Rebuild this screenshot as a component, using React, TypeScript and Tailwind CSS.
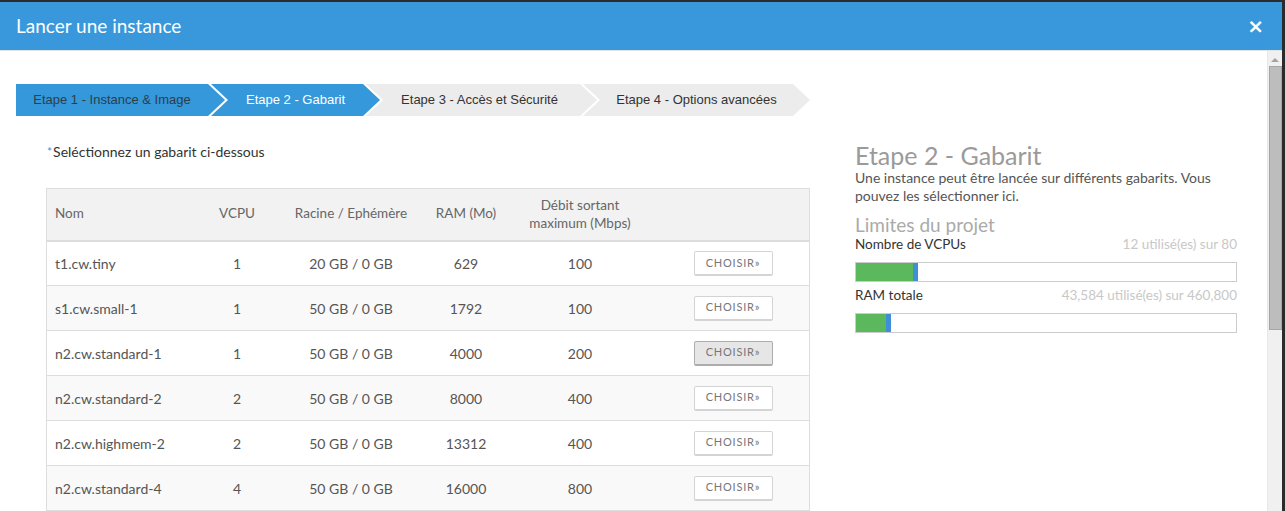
import React from 'react';

type Flavor = { name: string; vcpu: number; disk: string; ram: number; net: number; active?: boolean };

const FLAVORS: Flavor[] = [
  { name: 't1.cw.tiny', vcpu: 1, disk: '20 GB / 0 GB', ram: 629, net: 100 },
  { name: 's1.cw.small-1', vcpu: 1, disk: '50 GB / 0 GB', ram: 1792, net: 100 },
  { name: 'n2.cw.standard-1', vcpu: 1, disk: '50 GB / 0 GB', ram: 4000, net: 200, active: true },
  { name: 'n2.cw.standard-2', vcpu: 2, disk: '50 GB / 0 GB', ram: 8000, net: 400 },
  { name: 'n2.cw.highmem-2', vcpu: 2, disk: '50 GB / 0 GB', ram: 13312, net: 400 },
  { name: 'n2.cw.standard-4', vcpu: 4, disk: '50 GB / 0 GB', ram: 16000, net: 800 },
];

const FIRST = 'polygon(0 0, calc(100% - 17px) 0, 100% 50%, calc(100% - 17px) 100%, 0 100%)';
const NEXT = 'polygon(0 0, calc(100% - 17px) 0, 100% 50%, calc(100% - 17px) 100%, 0 100%, 17px 50%)';

const Steps = () => (
  <div className="flex h-[32px] font-['Liberation_Sans',Arial,sans-serif] text-[13px]">
    <div className="w-[209px] h-full bg-[#3498db] text-[#2d3e4a] flex items-center justify-center pr-[17px]" style={{ clipPath: FIRST }}>
      Etape 1 - Instance &amp; Image
    </div>
    <div className="w-[169px] -ml-[14px] h-full bg-[#3498db] text-white flex items-center justify-center pl-[17px] pr-[17px]" style={{ clipPath: NEXT }}>
      Etape 2 - Gabarit
    </div>
    <div className="w-[231px] -ml-[14px] h-full bg-[#ececec] text-[#333] flex items-center justify-center pl-[15px] pr-[19px]" style={{ clipPath: NEXT }}>
      Etape 3 - Accès et Sécurité
    </div>
    <div className="w-[227px] -ml-[14px] h-full bg-[#ececec] text-[#333] flex items-center justify-center pl-[17px] pr-[17px]" style={{ clipPath: NEXT }}>
      Etape 4 - Options avancées
    </div>
  </div>
);

const Quota = ({ label, used, green, blue }: { label: string; used: string; green: number; blue: number }) => (
  <div>
    <div className="flex justify-between text-[13.5px] leading-[18px]">
      <span className="text-[#333]">{label}</span>
      <span className="text-[#c8c8c8]">{used}</span>
    </div>
    <div className="mt-[9px] h-[20px] border border-[#ccc] flex bg-white">
      <div className="h-full bg-[#5cb85c]" style={{ width: green }} />
      <div className="h-full bg-[#3f8fd8]" style={{ width: blue }} />
    </div>
  </div>
);

const GRID = 'grid grid-cols-[154px_72px_156px_74px_154px_152px]';

export default function App() {
  return (
    <div className="w-[1285px] h-[511px] bg-[#2b2b2b] overflow-hidden pt-[2px] font-['Lato','Open_Sans',sans-serif]">
      <div className="w-[1282px] h-[509px] bg-white flex flex-col">
        <div className="h-[48px] shrink-0 bg-[#3898db] flex items-center justify-between pl-4 pr-[18px] border-b border-[#e3e3e3] box-content">
          <span className="text-white text-[19px]">Lancer une instance</span>
          <span className="text-white text-[20px] font-bold leading-none font-['DejaVu_Sans',sans-serif]">×</span>
        </div>
        <div className="flex flex-1 min-h-0">
          <div className="flex-1 pl-4 pt-[33px] overflow-hidden">
            <Steps />
            <div className="flex mt-[23px]">
              <div className="w-[794px] pl-[30px] pt-[4px]">
                <p className="text-[14px] leading-[18px] text-[#333] pl-[1px]">
                  <span className="text-[#3a8fd8] text-[12px] align-top mr-[1px]">*</span>Seléctionnez un gabarit ci-dessous
                </p>
                <div className="mt-[27px] border border-[#ddd] w-[764px] text-[14px] text-[#555]">
                  <div className={`${GRID} h-[53px] pb-[2px] bg-[#f2f2f2] border-b-2 border-[#ddd] text-[#666] text-[13.5px] items-center text-center`}>
                    <div className="text-left pl-[8px]">Nom</div>
                    <div>VCPU</div>
                    <div>Racine / Ephémère</div>
                    <div>RAM (Mo)</div>
                    <div className="leading-[18px]">Débit sortant<br />maximum (Mbps)</div>
                    <div />
                  </div>
                  {FLAVORS.map((f, i) => (
                    <div key={f.name} className={`${GRID} items-center text-center ${i > 0 ? 'h-[45px] border-t border-[#ddd]' : 'h-[43px]'} ${i % 2 === 1 ? 'bg-[#f9f9f9]' : 'bg-white'}`}>
                      <div className="text-left pl-[8px]">{f.name}</div>
                      <div>{f.vcpu}</div>
                      <div>{f.disk}</div>
                      <div>{f.ram}</div>
                      <div>{f.net}</div>
                      <div className="flex justify-center">
                        <button
                          className={`w-[79px] h-[25px] rounded-[2px] border border-b-2 text-[11px] tracking-[0.8px] text-[#777] ${f.active ? 'bg-[#e6e6e6] border-[#adadad]' : 'bg-white border-[#d4d4d4]'}`}
                        >
                          CHOISIR»
                        </button>
                      </div>
                    </div>
                  ))}
                </div>
              </div>
              <div className="ml-[45px] w-[382px] pt-[2px]">
                <h2 className="text-[25px] leading-[28px] text-[#9a9a9a]">Etape 2 - Gabarit</h2>
                <p className="text-[14px] leading-[18px] text-[#555] w-[362px]">
                  Une instance peut être lancée sur différents gabarits. Vous pouvez les sélectionner ici.
                </p>
                <h3 className="mt-[10px] text-[19px] leading-[20px] text-[#aaa]">Limites du projet</h3>
                <Quota label="Nombre de VCPUs" used="12 utilisé(es) sur 80" green={57} blue={5} />
                <div className="mt-[4px]">
                  <Quota label="RAM totale" used="43,584 utilisé(es) sur 460,800" green={30} blue={5} />
                </div>
              </div>
            </div>
          </div>
          <div className="w-[15px] shrink-0 bg-[#f0f0f0] border-l border-[#e8e8e8] flex flex-col items-center pt-[7px]">
            <div className="w-0 h-0 border-l-[4px] border-r-[4px] border-b-[4px] border-l-transparent border-r-transparent border-b-[#a3a3a3]" />
            <div className="mt-[4px] w-[13px] h-[264px] bg-[#bdbdbd] border border-[#a6a6a6]" />
          </div>
        </div>
      </div>
    </div>
  );
}
